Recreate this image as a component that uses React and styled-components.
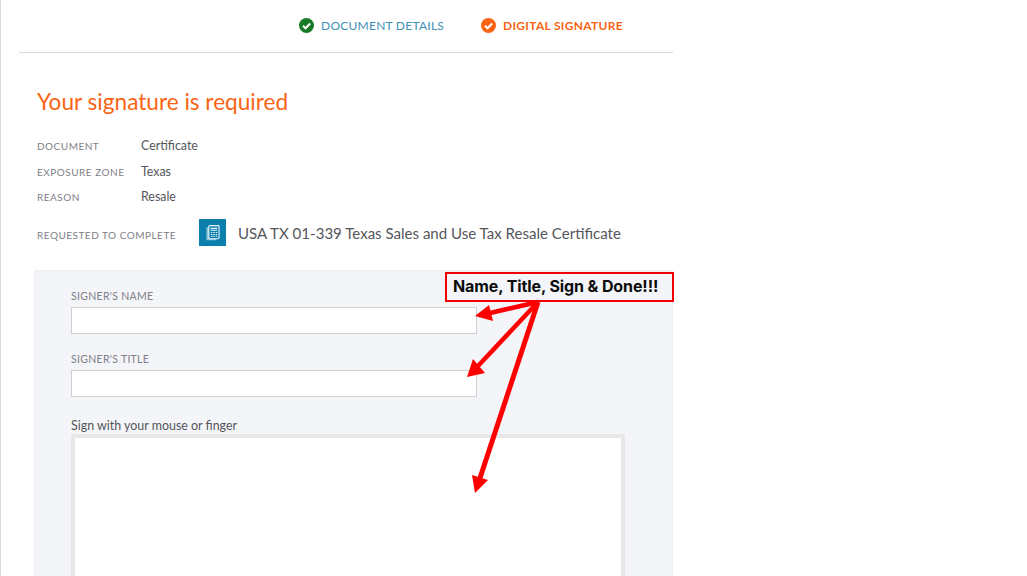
import React from "react";
import styled, { createGlobalStyle } from "styled-components";

const GlobalStyle = createGlobalStyle`
  html, body {
    margin: 0;
    padding: 0;
    height: 100%;
    overflow: hidden;
    background: #fff;
    font-family: "Lato", "Noto Sans", sans-serif;
  }
`;

const Page = styled.div`
  position: relative;
  width: 1027px;
  height: 576px;
  overflow: hidden;
  box-sizing: border-box;
  border-left: 1px solid #dcdcdc;
  padding-left: 18px;
`;

const Column = styled.div`
  width: 654px;
`;

const StepBar = styled.div`
  display: flex;
  align-items: center;
  gap: 37px;
  height: 50px;
  padding: 0 0 2px 280px;
  border-bottom: 1px solid #dcdcdc;
`;

const Step = styled.div`
  display: flex;
  align-items: center;
  gap: 7px;
  font-size: 12px;
  white-space: nowrap;
  letter-spacing: ${(p) => (p.$active ? "0.3px" : "0.25px")};
  font-weight: ${(p) => (p.$active ? 700 : 400)};
  color: ${(p) => (p.$active ? "#fa6414" : "#3f91b8")};
`;

const Body = styled.div`
  padding: 32px 0 0 18px;
`;

const Title = styled.h1`
  margin: 0 0 14px;
  font-size: 22.6px;
  line-height: 34px;
  font-weight: 400;
  color: #fa6414;
`;

const MetaRow = styled.div`
  display: flex;
  align-items: center;
  height: 25.5px;
`;

const MetaLabel = styled.span`
  width: 104px;
  flex-shrink: 0;
  white-space: nowrap;
  font-size: 10px;
  letter-spacing: 0.5px;
  color: #808087;
  padding-top: 1px;
`;

const MetaValue = styled.span`
  font-size: 12.4px;
  color: #55565b;
`;

const RequestRow = styled.div`
  display: flex;
  align-items: center;
  height: 28px;
  margin-top: 9px;
`;

const RequestLabel = styled(MetaLabel)`
  width: 162px;
  padding-top: 5px;
`;

const DocBadge = styled.div`
  display: flex;
  align-items: center;
  justify-content: center;
  width: 27px;
  height: 27px;
  background: #0b7fae;
  margin-right: 12px;
`;

const RequestTitle = styled.span`
  font-size: 15.05px;
  white-space: nowrap;
  color: #55565b;
`;

const Panel = styled.div`
  margin: 23px 0 0 -3px;
  width: 639px;
  height: 320px;
  box-sizing: border-box;
  padding: 18px 48px 0 36px;
  background: #f4f5f9;
  border: 1px solid #eef0f3;
  border-bottom: 0;
`;

const Field = styled.div`
  margin-bottom: 18px;
`;

const FieldLabel = styled.label`
  display: block;
  font-size: 10.5px;
  line-height: 14px;
  letter-spacing: 0.3px;
  color: #808087;
  margin-bottom: 4px;
`;

const TextInput = styled.input`
  display: block;
  width: 406px;
  height: 27px;
  box-sizing: border-box;
  border: 1px solid #cfcfcf;
  background: #fff;
  padding: 0 8px;
`;

const SignLabel = styled.div`
  font-size: 12.45px;
  line-height: 17px;
  color: #55565b;
  padding-top: 2px;
`;

const SignPad = styled.div`
  width: 554px;
  height: 200px;
  box-sizing: border-box;
  border: 4.5px solid #e7e7e8;
  background: #fff;
`;

const Callout = styled.div`
  position: absolute;
  left: 444px;
  top: 272px;
  width: 229px;
  height: 30px;
  box-sizing: border-box;
  border: 2px solid #f00000;
  padding: 0 0 2px 6px;
  display: flex;
  align-items: center;
  font-family: "Inter", "Liberation Sans", sans-serif;
  font-size: 16px;
  font-weight: 700;
  letter-spacing: -0.1px;
  color: #0c0c0c;
`;

const ArrowLayer = styled.svg`
  position: absolute;
  left: -1px;
  top: 0;
  pointer-events: none;
`;

const CheckCircle = ({ color }) => (
  <svg width="15" height="15" viewBox="0 0 16 16">
    <circle cx="8" cy="8" r="8" fill={color} />
    <path d="M4.2 8.2 L7 11 L11.9 5.8" fill="none" stroke="#fff" strokeWidth="2.2" />
  </svg>
);

const DocIcon = () => (
  <svg width="14" height="16" viewBox="0 0 15 17">
    <rect x="0.4" y="2.4" width="10.5" height="14" rx="1" fill="#8cc3da" />
    <rect x="3" y="0.6" width="11" height="14" rx="1" fill="#0b7fae" stroke="#e6f2f7" strokeWidth="1.2" />
    <path d="M5 3.5H12M5 5.5H12" stroke="#e6f2f7" strokeWidth="1.2" />
    <path d="M5.2 8H6.8M7.8 8H9.4M10.4 8H12M5.2 10H6.8M7.8 10H9.4M10.4 10H12M5.2 12H6.8M7.8 12H9.4M10.4 12H12" stroke="#e6f2f7" strokeWidth="1.1" />
  </svg>
);

// red annotation arrows drawn over the form
const Arrows = () => (
  <ArrowLayer width="1027" height="576" viewBox="0 0 1027 576">
    <g stroke="#ff0000" strokeWidth="4.5" fill="none">
      <path d="M538 302 L490 313" />
      <path d="M538 302 L478 366" />
      <path d="M538 302 L480 478" strokeWidth="5" />
    </g>
    <g fill="#ff0000">
      <path d="M475 316 L489 305 L493 321 Z" />
      <path d="M467 377 L473 359 L485 373 Z" />
      <path d="M475 493 L472 475 L488 480 Z" />
    </g>
  </ArrowLayer>
);

const META = [
  ["DOCUMENT", "Certificate"],
  ["EXPOSURE ZONE", "Texas"],
  ["REASON", "Resale"],
];

export default function App() {
  return (
    <Page>
      <GlobalStyle />
      <Column>
        <StepBar>
          <Step>
            <CheckCircle color="#177a24" />
            DOCUMENT DETAILS
          </Step>
          <Step $active>
            <CheckCircle color="#fa6414" />
            DIGITAL SIGNATURE
          </Step>
        </StepBar>
        <Body>
          <Title>Your signature is required</Title>
          {META.map(([label, value]) => (
            <MetaRow key={label}>
              <MetaLabel>{label}</MetaLabel>
              <MetaValue>{value}</MetaValue>
            </MetaRow>
          ))}
          <RequestRow>
            <RequestLabel>REQUESTED TO COMPLETE</RequestLabel>
            <DocBadge>
              <DocIcon />
            </DocBadge>
            <RequestTitle>USA TX 01-339 Texas Sales and Use Tax Resale Certificate</RequestTitle>
          </RequestRow>
          <Panel>
            <Field>
              <FieldLabel>SIGNER'S NAME</FieldLabel>
              <TextInput />
            </Field>
            <Field>
              <FieldLabel>SIGNER'S TITLE</FieldLabel>
              <TextInput />
            </Field>
            <SignLabel>Sign with your mouse or finger</SignLabel>
            <SignPad />
          </Panel>
        </Body>
      </Column>
      <Callout>Name, Title, Sign &amp; Done!!!</Callout>
      <Arrows />
    </Page>
  );
}
